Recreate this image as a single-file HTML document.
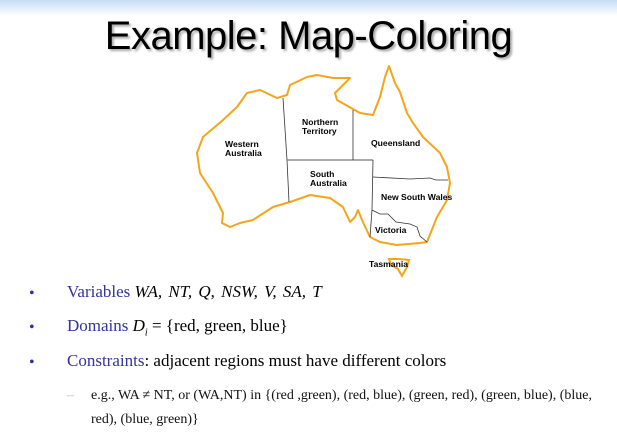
<!DOCTYPE html>
<html><head><style>
body{margin:0;width:617px;height:440px;overflow:hidden;background:#fff;position:relative;font-family:"Liberation Serif",serif}
.top{position:absolute;left:0;top:0;width:617px;height:16px;background:linear-gradient(#c6dcf6,#fff)}
h1{position:absolute;left:0;width:617px;top:14px;margin:0;text-align:center;font:40px "Liberation Sans",sans-serif;color:#000;text-shadow:2px 2px 2px #aaa;letter-spacing:-0.5px}
.b{position:absolute;font-size:17px;color:#000;white-space:nowrap}
.dot{position:absolute;left:-38px;color:#33339a;font-size:16px;top:3px}
.n{color:#33339a}
.s{position:absolute;left:91px;font-size:14px;color:#111;white-space:nowrap}
svg text{font:bold 8.6px "Liberation Sans",sans-serif}
</style></head><body>
<div class="top"></div>
<h1>Example: Map-Coloring</h1>
<svg width="617" height="440" style="position:absolute;left:0;top:0">
<path d="M277,98 L287,95 L290,85 L307,77 L317,75 L333,78 L350,78 L335,93 L337,100 L360,113 L373,115 L380,97 L385,77 L389,66 L395,83 L400,92 L407,113 L413,123 L423,137 L440,153 L447,167 L450,183 L447,200 L437,217 L427,242 L420,243 L397,245 L380,242 L370,237 L362,220 L358,210 L355,217 L350,222 L343,207 L330,198 L310,195 L290,202 L273,207 L253,220 L240,223 L230,227 L222,223 L223,213 L213,193 L200,173 L197,153 L203,137 L223,120 L237,107 L247,93 L260,90 Z" fill="none" stroke="#f5a51b" stroke-width="2" stroke-linejoin="round"/>
<path d="M389,259 L399,259 L409,260 L407,267 L402,276 L398,269 L391,265 Z" fill="none" stroke="#f5a51b" stroke-width="2"/>
<g fill="none" stroke="#333" stroke-width="0.8">
<path d="M283,98 L287,160 L289,202"/>
<path d="M287,160 L373,160" stroke="#777" stroke-width="1.2"/>
<path d="M353,110 L353,160"/>
<path d="M373,160 L372,210 L370,237"/>
<path d="M373,177 L410,179 L430,178 L436,180 L448,180"/>
<path d="M372,210 L380,214 L388,214 L396,222 L410,224 L417,227 L420,236 L427,242"/>
</g>
<text x="225" y="147">Western</text><text x="225" y="156">Australia</text>
<text x="302" y="125">Northern</text><text x="302" y="134">Territory</text>
<text x="371" y="146">Queensland</text>
<text x="310" y="177">South</text><text x="310" y="186">Australia</text>
<text x="381" y="200">New South Wales</text>
<text x="375" y="233">Victoria</text>
<text x="369" y="267">Tasmania</text>
</svg>
<div class="b" style="left:67px;top:282px"><span class="dot">•</span><span class="n">Variables</span> <i style="word-spacing:2px">WA, NT, Q, NSW, V, SA, T</i></div>
<div class="b" style="left:67px;top:316px"><span class="dot">•</span><span class="n">Domains</span> <i>D<sub style="font-size:10px">i</sub></i> = {red, green, blue}</div>
<div class="b" style="left:67px;top:351px"><span class="dot">•</span><span class="n">Constraints</span>: adjacent regions must have different colors</div>
<div class="s" style="top:388px"><span style="position:absolute;left:-24px;color:#bbb">–</span>e.g., WA ≠ NT, or (WA,NT) in {(red ,green), (red, blue), (green, red), (green, blue), (blue,</div>
<div class="s" style="top:412px">red), (blue, green)}</div>
</body></html>
